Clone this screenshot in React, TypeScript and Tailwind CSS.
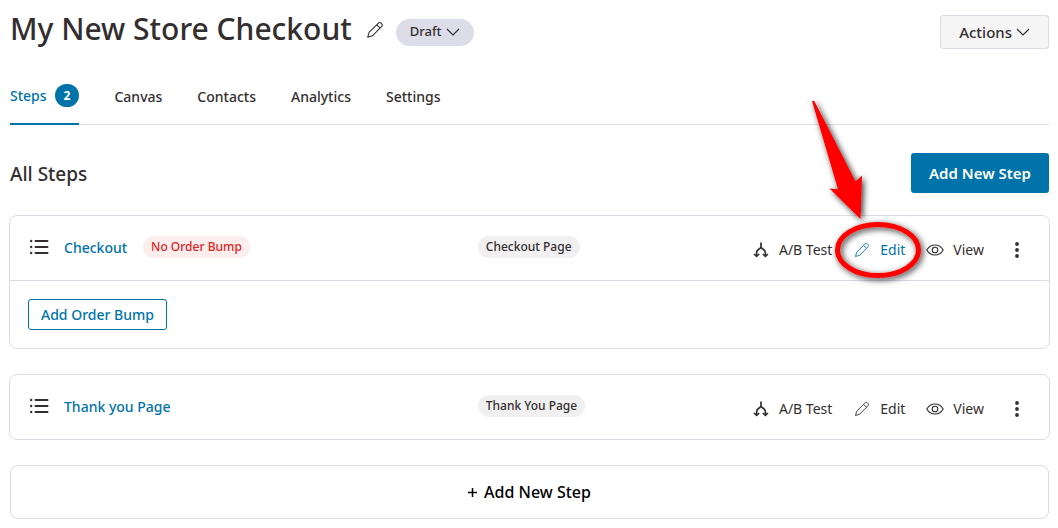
import type { ReactNode } from "react";

function PencilIcon({ size }: { size: number }) {
  return (
    <svg width={size} height={size} viewBox="0 0 16 16" fill="none" stroke="currentColor" strokeWidth="0.9" strokeLinejoin="round" aria-hidden="true">
      <path d="M1.5 14.500 2.700 10.200 10.800 2.100c.8-.8 1.800-.9 2.600-.2l.5.5c.8.8.7 1.800-.1 2.600L5.700 13.200Z" />
      <path d="M9.500 3.400l3.100 2.900" />
    </svg>
  );
}

function ChevronIcon() {
  return (
    <svg width="14" height="8" viewBox="0 0 14 8" fill="none" stroke="currentColor" strokeWidth="1.2" aria-hidden="true">
      <path d="m1 1 6 6 6-6" />
    </svg>
  );
}

function ListIcon() {
  return (
    <svg width="19" height="16" viewBox="0 0 19 16" fill="#332e2f" aria-hidden="true">
      <circle cx="1.2" cy="2" r="1.2" />
      <circle cx="1.2" cy="8" r="1.2" />
      <circle cx="1.2" cy="14" r="1.2" />
      <rect x="4.5" y="1" width="14" height="2" rx="1" />
      <rect x="4.5" y="7" width="14" height="2" rx="1" />
      <rect x="4.5" y="13" width="14" height="2" rx="1" />
    </svg>
  );
}

function SplitIcon() {
  return (
    <svg width="16" height="16" viewBox="0 0 16 16" fill="none" stroke="#332e2f" aria-hidden="true">
      <path d="M8 .5v5M8 5C7.600 7.200 3.600 7.200 3.600 10.600V14M8 5c.4 2.200 4.400 2.200 4.400 5.600V14" strokeWidth="1.7" />
      <path d="m1 12 2.600 2.400L6.200 12M9.800 12l2.600 2.400L15 12" strokeWidth="1.7" />
    </svg>
  );
}

function EyeIcon() {
  return (
    <svg width="18" height="12" viewBox="0 0 18 12" fill="none" stroke="#332e2f" strokeWidth="1.1" aria-hidden="true">
      <path d="M.8 6C4.6-.6 13.400-.6 17.200 6 13.400 12.600 4.600 12.600.8 6Z" />
      <circle cx="9" cy="6" r="2.800" />
    </svg>
  );
}

function DotsIcon() {
  return (
    <svg width="4" height="16" viewBox="0 0 4 16" fill="#332e2f" aria-hidden="true">
      <circle cx="2" cy="2" r="1.900" />
      <circle cx="2" cy="8" r="1.900" />
      <circle cx="2" cy="14" r="1.900" />
    </svg>
  );
}

function Callout() {
  return (
    <svg
      className="pointer-events-none absolute -left-[46px] -top-36 z-10 max-w-none"
      width="130"
      height="195"
      viewBox="808 95 130 195"
      aria-hidden="true"
    >
      <defs>
        <filter id="callout-shadow" x="-30%" y="-30%" width="160%" height="160%">
          <feDropShadow dx="2" dy="2" stdDeviation="3" floodColor="#000" floodOpacity="0.8" />
        </filter>
      </defs>
      <g filter="url(#callout-shadow)">
        <path d="M813 100h2.300l41.200 80.500 6.500-6-1.500 43.500-31-30.500 8.500.8Z" fill="#f00" />
        <ellipse cx="879" cy="249" rx="40.500" ry="25.500" fill="none" stroke="#f00" strokeWidth="5" />
      </g>
    </svg>
  );
}

function Action({ icon, label, active, children }: { icon: ReactNode; label: string; active?: boolean; children?: ReactNode }) {
  return (
    <a href="#" className={`relative flex items-center gap-[9px] ${active ? "text-[#0073aa]" : "text-[#332e2f]"}`}>
      <span className="flex w-[18px] justify-center">{icon}</span>
      {label}
      {children}
    </a>
  );
}

function StepCard({ title, type, warning, highlight, children }: { title: string; type: string; warning?: string; highlight?: boolean; children?: ReactNode }) {
  return (
    <section className="-mx-px rounded-lg border border-[#dddbe8] bg-white">
      <div className="grid h-16 grid-cols-[13fr_16fr] items-center px-5 pb-0.5">
        <div className="flex items-center">
          <ListIcon />
          <a href="#" className="ml-[15px] text-[14px] font-medium text-[#0073aa]">{title}</a>
          {warning && (
            <span className="ml-4 rounded-full bg-[#fdeeee] px-2 text-[12px] leading-[22px] font-medium text-[#dc2626]">{warning}</span>
          )}
        </div>
        <div className="flex items-center justify-between">
          <span className="rounded-full bg-[#f0f0f0] px-2 text-[12px] leading-[22px] font-medium text-[#332e2f]">{type}</span>
          <div className="flex items-center gap-[21px] pt-1.5 text-[14px] leading-5 font-normal">
            <Action icon={<SplitIcon />} label="A/B Test" />
            <Action icon={<PencilIcon size={16} />} label="Edit" active={highlight}>
              {highlight && <Callout />}
            </Action>
            <Action icon={<EyeIcon />} label="View" />
            <button type="button" aria-label="More options" className="flex w-6 justify-center">
              <DotsIcon />
            </button>
          </div>
        </div>
      </div>
      {children && <div className="border-t border-[#dddbe8] px-[18px] py-[18px]">{children}</div>}
    </section>
  );
}

const tabs = ["Canvas", "Contacts", "Analytics", "Settings"];

export default function App() {
  return (
    <main className="min-h-screen bg-white pr-[9px] pb-2 pl-[10px] font-['Noto_Sans',sans-serif] text-[#332e2f]">
      <header className="flex h-[62px] items-center pt-0.5">
        <h1 className="pb-1.5 text-[30px] leading-10 font-medium">My New Store Checkout</h1>
        <button type="button" aria-label="Rename" className="ml-[14px] pb-1">
          <PencilIcon size={18} />
        </button>
        <button type="button" className="ml-3 flex h-[27px] items-center gap-1 rounded-full bg-[#dddce9] px-[14px] text-[13px] font-medium">
          Draft
          <ChevronIcon />
        </button>
        <button type="button" className="ml-auto flex h-[34px] items-center gap-1 rounded-[3px] border border-[#dddbe8] bg-[#f5f5f5] px-[18px] text-[15px] font-medium">
          Actions
          <ChevronIcon />
        </button>
      </header>

      <nav className="mt-[10px] flex h-[53px] gap-[35px] border-b border-[#dddbe8] text-[14px] font-medium">
        <a href="#" className="-mb-px flex items-center gap-2 border-b-2 border-[#0073aa] pb-1 text-[#0073aa]">
          Steps
          <span className="rounded-full bg-[#0073aa] px-[9px] text-[12px] leading-[23px] font-bold text-white">2</span>
        </a>
        {tabs.map((tab) => (
          <a key={tab} href="#" className="flex items-center pb-1">
            {tab}
          </a>
        ))}
      </nav>

      <div className="mt-7 flex h-10 items-center justify-between">
        <h2 className="pt-0.5 text-[19px] font-medium">All Steps</h2>
        <button type="button" className="h-10 rounded-[3px] bg-[#0073aa] px-[18px] text-[15px] font-semibold text-white">
          Add New Step
        </button>
      </div>

      <div className="mt-[22px] flex flex-col gap-[25px]">
        <StepCard title="Checkout" type="Checkout Page" warning="No Order Bump" highlight>
          <button type="button" className="h-[31px] rounded-[3px] border border-[#0073aa] px-3 text-[14px] font-medium text-[#0073aa]">
            Add Order Bump
          </button>
        </StepCard>
        <StepCard title="Thank you Page" type="Thank You Page" />
      </div>

      <button type="button" className="mt-[25px] flex h-[54px] w-full items-center justify-center gap-[7px] rounded-lg border border-[#dddbe8] text-[16px] font-medium text-black">
        <svg width="9" height="9" viewBox="0 0 9 9" stroke="currentColor" strokeWidth="1.500" aria-hidden="true">
          <path d="M4.500 0v9M0 4.500h9" />
        </svg>
        Add New Step
      </button>
    </main>
  );
}
